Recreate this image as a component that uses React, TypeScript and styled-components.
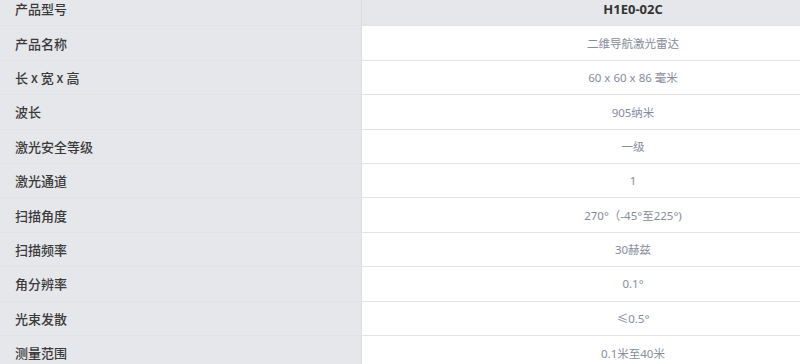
import React from "react";
import styled, { createGlobalStyle } from "styled-components";

const Global = createGlobalStyle`
  html, body { margin: 0; padding: 0; background: #ffffff; overflow: hidden; }
  body { font-family: "Noto Sans CJK SC", "Noto Sans", sans-serif; }
`;

const Page = styled.div`
  width: 800px;
  height: 364px;
  overflow: hidden;
`;

const Table = styled.div`
  width: 904px;
  margin-top: -8px;
  display: flex;
  flex-direction: column;
`;

const Row = styled.div<{ $head?: boolean }>`
  display: grid;
  grid-template-columns: 362px 1fr;
  height: 34.4px;
  box-sizing: border-box;
  border-bottom: 1px solid #e2e3e7;
  background: ${(p) => (p.$head ? "#e6e7eb" : "#ffffff")};
`;

const Label = styled.div`
  display: flex;
  align-items: center;
  padding-left: 15px;
  background: #e6e7eb;
  border-right: 1px solid #dcdde1;
  font-size: 13px;
  font-weight: 500;
  color: #3a3a3a;
`;

const Value = styled.div<{ $head?: boolean }>`
  display: flex;
  align-items: center;
  justify-content: center;
  font-size: ${(p) => (p.$head ? "13px" : "11.5px")};
  font-weight: ${(p) => (p.$head ? 700 : 400)};
  color: ${(p) => (p.$head ? "#333333" : "#868b9b")};
  font-family: ${(p) =>
    p.$head
      ? `"Open Sans", "Noto Sans CJK SC", sans-serif`
      : `"Noto Sans", "Noto Sans CJK SC", sans-serif`};
`;

const rows: [string, string][] = [
  ["产品名称", "二维导航激光雷达"],
  ["长 x 宽 x 高", "60 x 60 x 86 毫米"],
  ["波长", "905纳米"],
  ["激光安全等级", "一级"],
  ["激光通道", "1"],
  ["扫描角度", "270°（-45°至225°)"],
  ["扫描频率", "30赫兹"],
  ["角分辨率", "0.1°"],
  ["光束发散", "≤0.5°"],
  ["测量范围", "0.1米至40米"],
];

export default function App() {
  return (
    <Page>
      <Global />
      <Table>
        <Row $head>
          <Label>产品型号</Label>
          <Value $head>H1E0-02C</Value>
        </Row>
        {rows.map(([k, v]) => (
          <Row key={k}>
            <Label>{k}</Label>
            <Value>{v}</Value>
          </Row>
        ))}
      </Table>
    </Page>
  );
}
